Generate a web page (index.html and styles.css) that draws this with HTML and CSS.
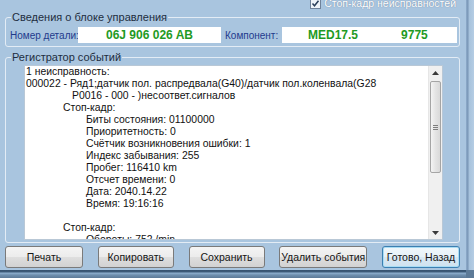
FILE: index.html
```html
<!DOCTYPE html>
<html lang="ru">
<head>
<meta charset="utf-8">
<title>Регистратор событий</title>
<link rel="stylesheet" href="styles.css">
</head>
<body>
<div class="screen">
  <div class="window">
    <div class="topbar">
      <label class="check"><span class="box"><svg width="9" height="9" viewBox="0 0 9 9"><path d="M1.5 4.5 L3.5 6.8 L7.5 1.8" fill="none" stroke="#2a3f5a" stroke-width="1.5"/></svg></span>Стоп-кадр неисправностей</label>
    </div>
    <fieldset class="group info">
      <legend>Сведения о блоке управления</legend>
      <div class="inforow">
        <span class="lbl lbl1">Номер детали:</span>
        <div class="field f1">06J 906 026 AB</div>
        <span class="lbl lbl2">Компонент:</span>
        <div class="field f2"><span class="v1">MED17.5</span><span class="v2">9775</span></div>
      </div>
    </fieldset>
    <fieldset class="group log">
      <legend>Регистратор событий</legend>
      <div class="logbox">
        <div class="logtext">
          <div class="l0">1 неисправность:</div>
          <div class="l0">000022 - Ряд1;датчик пол. распредвала(G40)/датчик пол.коленвала(G28</div>
          <div class="l2">P0016 - 000 - )несоответ.сигналов</div>
          <div class="l1">Стоп-кадр:</div>
          <div class="l3">Биты состояния: 01100000</div>
          <div class="l3">Приоритетность: 0</div>
          <div class="l3">Счётчик возникновения ошибки: 1</div>
          <div class="l3">Индекс забывания: 255</div>
          <div class="l3">Пробег: 116410 km</div>
          <div class="l3">Отсчет времени: 0</div>
          <div class="l3">Дата: 2040.14.22</div>
          <div class="l3">Время: 19:16:16</div>
          <div class="l3">&nbsp;</div>
          <div class="l1">Стоп-кадр:</div>
          <div class="l3">Обороты: 752 /min</div>
        </div>
        <div class="scrollbar">
          <div class="arrow up"><svg width="7" height="4" viewBox="0 0 7 4"><path d="M0 4 L3.5 0 L7 4Z" fill="#3a3a3a"/></svg></div>
          <div class="track">
            <div class="thumb"><span class="grip"></span></div>
          </div>
          <div class="arrow down"><svg width="7" height="4" viewBox="0 0 7 4"><path d="M0 0 L3.5 4 L7 0Z" fill="#3a3a3a"/></svg></div>
        </div>
      </div>
    </fieldset>
    <div class="buttons">
      <button class="btn w78">Печать</button>
      <button class="btn w76">Копировать</button>
      <button class="btn w76">Сохранить</button>
      <button class="btn w88">Удалить события</button>
      <button class="btn w78 default">Готово, Назад</button>
    </div>
  </div>
  <div class="edge-right"></div>
  <div class="edge-bottom"></div>
  <div class="edge-corner"></div>
</div>
</body>
</html>
```
FILE: styles.css
```css
html, body {
  margin: 0;
  padding: 0;
  overflow: hidden;
}
body {
  width: 474px;
  height: 278px;
  font-family: "Liberation Sans", Arial, sans-serif;
  background: #a9c5df;
}
.screen {
  display: grid;
  grid-template-columns: 466px 8px;
  grid-template-rows: 270px 8px;
  width: 474px;
  height: 278px;
}
.window {
  background: #a9c5df;
  padding: 0 6px 0 5px;
  display: flex;
  flex-direction: column;
  overflow: hidden;
}
.edge-right {
  background: linear-gradient(to right, #8eaccb 0, #7895b5 2px, #a6c2dc 3px, #b5cde4 8px);
}
.edge-bottom {
  background: linear-gradient(to bottom, #37526f 0, #3e5b79 2px, #8fb0cf 3px, #6f8fae 5px, #5d7a97 8px);
}
.edge-corner {
  background: #5d7a97;
}
.topbar {
  height: 9px;
  display: flex;
  justify-content: flex-end;
  padding-right: 4px;
}
.check {
  margin-top: -2px;
  display: flex;
  align-items: center;
  gap: 3px;
  font-size: 10.5px;
  line-height: 11px;
  color: #ffffff;
  font-weight: normal;
  white-space: nowrap;
  text-shadow: 0 0 1px rgba(40, 60, 90, 0.6);
}
.box {
  width: 9px;
  height: 9px;
  background: #eef3f8;
  border: 1px solid #6f829a;
  display: flex;
}
.group {
  margin: 0;
  border: 1px solid #e3ecf5;
  border-radius: 3px;
  min-width: 0;
  padding-left: 0;
  padding-right: 0;
}
.group legend {
  font-size: 11px;
  line-height: 12px;
  color: #1e2d3e;
  padding: 0 1px;
  margin-left: 5px;
}
.info {
  margin-top: 2px;
  padding-top: 4px;
  padding-bottom: 3px;
}
.inforow {
  display: flex;
  align-items: center;
  height: 16px;
  margin: 0 2px 0 4px;
}
.lbl {
  font-size: 10px;
  color: #1f3a8c;
  white-space: nowrap;
}
.lbl1 { width: 68px; }
.lbl2 { width: 57px; margin-left: 4px; }
.field {
  height: 16px;
  background: #ffffff;
  color: #1f9a24;
  font-weight: bold;
  font-size: 12px;
  line-height: 16px;
  display: flex;
  align-items: center;
}
.f1 {
  width: 143px;
  justify-content: center;
}
.f2 {
  flex: 1;
}
.f2 .v1 { margin-left: 26px; }
.f2 .v2 { margin-left: 43px; }
.log {
  margin-top: 4px;
  padding-top: 2px;
  padding-bottom: 2px;
}
.logbox {
  height: 175px;
  margin: 0 16px 0 18px;
  background: #ffffff;
  border: 1px solid #b9c8d6;
  display: flex;
  box-sizing: border-box;
  overflow: hidden;
}
.logtext {
  flex: 1;
  font-size: 10.4px;
  line-height: 12px;
  color: #111111;
  padding: 0 0 0 1px;
  white-space: nowrap;
  overflow: hidden;
}
.l2 { padding-left: 46px; }
.l1 { padding-left: 37px; }
.l3 { padding-left: 60px; }
.scrollbar {
  width: 13px;
  background: #f0f0f0;
  border-left: 1px solid #e6e6e6;
  display: flex;
  flex-direction: column;
}
.arrow {
  height: 13px;
  display: flex;
  align-items: center;
  justify-content: center;
}
.track {
  flex: 1;
  padding-top: 2px;
}
.thumb {
  height: 90px;
  margin: 0 1px;
  border: 1px solid #a5a5a5;
  border-radius: 2px;
  background: linear-gradient(to right, #f4f4f4, #e4e4e4 50%, #d9d9d9);
  display: flex;
  align-items: center;
  justify-content: center;
}
.grip {
  width: 5px;
  height: 5px;
  background: repeating-linear-gradient(to bottom, #7e7e7e 0 1px, transparent 1px 2px);
}
.buttons {
  margin-top: 3px;
  height: 22px;
  display: flex;
  justify-content: space-between;
}
.btn {
  height: 22px;
  padding: 0;
  font-family: "Liberation Sans", Arial, sans-serif;
  font-size: 10.5px;
  color: #151515;
  border: 1px solid #7a7a7a;
  border-radius: 3px;
  background: linear-gradient(to bottom, #f4f4f4 0, #ececec 48%, #dedede 52%, #d2d2d2 100%);
}
.w78 { width: 78px; }
.w76 { width: 76px; }
.w88 { width: 88px; }
.default {
  border-color: #3c7fb1;
  box-shadow: inset 0 0 0 1px #a8dcf4;
  background: linear-gradient(to bottom, #f0f7fb 0, #e6f1f8 48%, #d8e8f3 52%, #cfe2ef 100%);
}
```
